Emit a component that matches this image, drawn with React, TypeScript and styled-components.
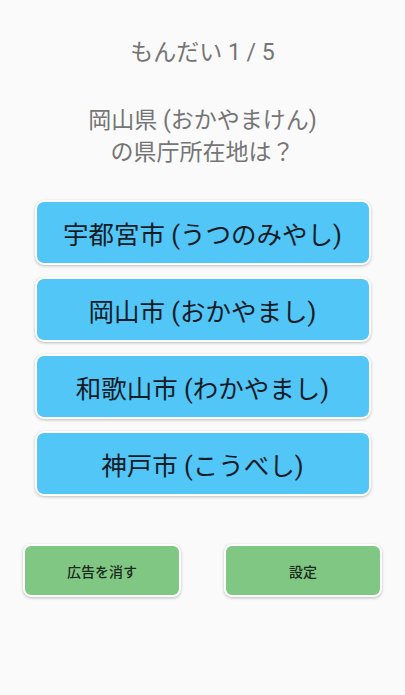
import { FunctionComponent } from 'react';
import { createGlobalStyle, styled } from 'styled-components';

const GlobalStyle = createGlobalStyle`
  html, body {
    margin: 0;
    padding: 0;
    background: #fafafa;
  }
  body {
    font-family: Roboto, 'Noto Sans CJK JP', 'Noto Sans', sans-serif;
  }
`;

const choices = [
  '宇都宮市 (うつのみやし)',
  '岡山市 (おかやまし)',
  '和歌山市 (わかやまし)',
  '神戸市 (こうべし)',
];

const App: FunctionComponent = () => (
  <>
    <GlobalStyle />
    <Screen>
      <Progress>もんだい 1 / 5</Progress>
      <Question>
        岡山県 (おかやまけん)
        <br />
        の県庁所在地は？
      </Question>
      <Choices>
        {choices.map((c) => (
          <ChoiceButton key={c}>{c}</ChoiceButton>
        ))}
      </Choices>
      <Footer>
        <SubButton>広告を消す</SubButton>
        <SubButton>設定</SubButton>
      </Footer>
    </Screen>
  </>
);

const Screen = styled.div`
  width: 405px;
  height: 695px;
  display: flex;
  flex-direction: column;
  align-items: center;
  background: #fafafa;
`;
const Progress = styled.div`
  margin-top: 37px;
  font-size: 23px;
  line-height: 32px;
  color: #757575;
`;
const Question = styled.div`
  margin-top: 36px;
  font-size: 23px;
  line-height: 32px;
  color: #757575;
  text-align: center;
`;
const Choices = styled.div`
  margin-top: 31px;
  width: 336px;
  display: flex;
  flex-direction: column;
  gap: 12px;
`;
const ChoiceButton = styled.button`
  height: 65px;
  border: 2px solid #ffffff;
  border-radius: 9px;
  background: #52c6f6;
  box-shadow: 0 1px 3px rgba(0, 0, 0, 0.25);
  font-family: inherit;
  font-size: 25.5px;
  color: #131c26;
  padding: 0;
`;
const Footer = styled.div`
  margin-top: 48px;
  width: 359px;
  display: flex;
  justify-content: space-between;
`;
const SubButton = styled.button`
  width: 158px;
  height: 53px;
  border: 2px solid #ffffff;
  border-radius: 8px;
  background: #80c784;
  box-shadow: 0 1px 3px rgba(0, 0, 0, 0.25);
  font-family: inherit;
  font-size: 14px;
  font-weight: 500;
  color: #1b2a1c;
  padding: 0;
`;

export default App;
